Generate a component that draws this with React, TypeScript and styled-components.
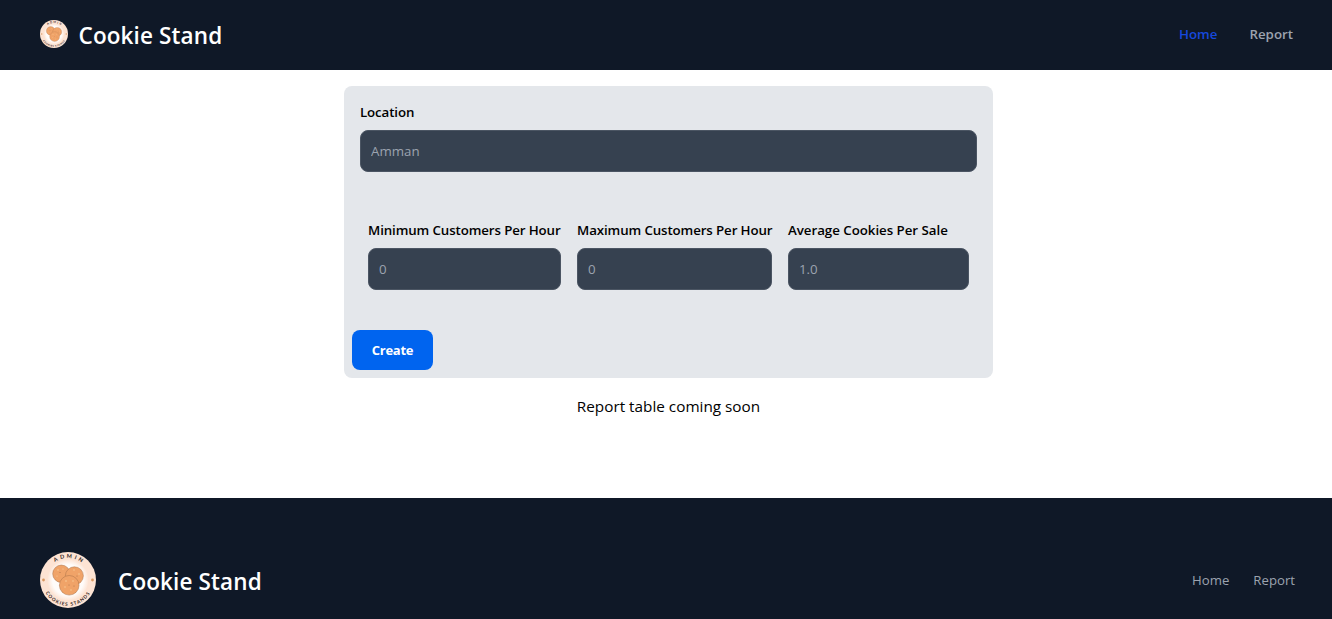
import React from "react";
import styled, { createGlobalStyle } from "styled-components";

const Global = createGlobalStyle`
  *, *::before, *::after { box-sizing: border-box; }
  html, body { margin: 0; height: 619px; overflow: hidden; }
  body {
    background: #fff;
    color: #000;
    font-family: "Open Sans", "Noto Sans", sans-serif;
    font-size: 15.3px;
    line-height: 24px;
  }
`;

const Header = styled.header`
  display: flex;
  align-items: center;
  justify-content: space-between;
  height: 70px;
  padding: 0 39px 2px 40px;
  background: #0f1827;
`;

const Brand = styled.a<{ $gap: number }>`
  display: flex;
  align-items: center;
  gap: ${(p) => p.$gap}px;
  color: #fff;
  text-decoration: none;
`;

const BrandName = styled.span`
  padding-top: 3px;
  font-size: 22.5px;
  font-weight: 600;
  line-height: 32px;
  letter-spacing: 0.12px;
  white-space: nowrap;
`;

const Nav = styled.nav<{ $gap: number }>`
  display: flex;
  gap: ${(p) => p.$gap}px;
`;

const NavLink = styled.a<{ $active?: boolean; $strong?: boolean }>`
  color: ${(p) => (p.$active ? "#1648dc" : "#9ca3af")};
  font-size: ${(p) => (p.$strong ? 13.3 : 13.2)}px;
  font-weight: ${(p) => (p.$strong ? 600 : 400)};
  line-height: 20px;
  text-decoration: none;
`;

const Main = styled.main`
  display: flex;
  flex-direction: column;
  align-items: center;
  height: 428px;
  padding: 16px 0 0 5px;
`;

const Form = styled.form`
  display: flex;
  flex-direction: column;
  align-items: flex-start;
  width: 649px;
  height: 292px;
  padding: 8px;
  background: #e4e7eb;
  border-radius: 8px;
`;

const FieldRow = styled.div`
  display: flex;
  gap: 16px;
  margin: 32px 0;
  padding: 16px 16px 8px;
`;

const Field = styled.div<{ $width: number }>`
  display: flex;
  flex-direction: column;
  gap: 8px;
  width: ${(p) => p.$width}px;
`;

const LocationField = styled(Field)`
  margin: 8px 8px 0;
`;

const Label = styled.label<{ $track?: number }>`
  font-size: 13.3px;
  font-weight: 600;
  line-height: 20px;
  letter-spacing: ${(p) => p.$track ?? -0.11}px;
  white-space: nowrap;
`;

const Input = styled.input`
  width: 100%;
  height: 42px;
  padding: 0 10px;
  border: 1px solid #4b5563;
  border-radius: 8px;
  background: #364150;
  color: #fff;
  font: 13.3px/20px "Open Sans", "Noto Sans", sans-serif;
  &::placeholder { color: #9ca3af; opacity: 1; }
`;

const Button = styled.button`
  flex: none;
  width: 81px;
  height: 40px;
  padding: 0;
  border: 0;
  border-radius: 8px;
  background: #0064ef;
  color: #fff;
  font: 700 13px/20px "Open Sans", "Noto Sans", sans-serif;
  letter-spacing: -0.25px;
`;

const Notice = styled.p`
  margin: 16px 0 0;
  white-space: nowrap;
`;

const Footer = styled.footer`
  display: flex;
  align-items: flex-start;
  justify-content: space-between;
  height: 121px;
  padding: 54px 37px 0 40px;
  background: #0f1827;
`;

const FooterNav = styled(Nav)`
  padding-top: 18px;
`;

function Logo({ size }: { size: number }) {
  return (
    <svg width={size} height={size} viewBox="0 0 56 56" aria-label="Cookie Stand logo">
      <defs>
        <path id={`top${size}`} d="M6 28a22 22 0 0 1 44 0" />
        <path id={`bottom${size}`} d="M2.2 28a25.8 25.8 0 0 0 51.6 0" />
        <radialGradient id={`glow${size}`}>
          <stop offset="0.75" stopColor="#fffcfa" />
          <stop offset="1" stopColor="#fde5d6" />
        </radialGradient>
      </defs>
      <circle cx="28" cy="28" r="28" fill="#fde3d3" />
      <circle cx="28" cy="28" r="20.5" fill={`url(#glow${size})`} />
      <g fill="#f0a368" stroke="#a87048" strokeWidth="0.5">
        <circle cx="21.4" cy="21.8" r="8.7" />
        <circle cx="34.4" cy="23.8" r="9" />
        <circle cx="29.2" cy="33.3" r="9.8" />
      </g>
      <g fill="#f8cf9c">
        <circle cx="18" cy="18" r="0.7" />
        <circle cx="23" cy="17" r="0.6" />
        <circle cx="17" cy="24" r="0.6" />
        <circle cx="34" cy="18" r="0.7" />
        <circle cx="39" cy="22" r="0.7" />
        <circle cx="26" cy="29" r="0.8" />
        <circle cx="33" cy="29" r="0.7" />
        <circle cx="25" cy="35" r="0.7" />
        <circle cx="31" cy="38" r="0.7" />
      </g>
      <g fill="#a66f48">
        <circle cx="20" cy="20.5" r="0.5" />
        <circle cx="37" cy="24" r="0.5" />
        <circle cx="29" cy="33" r="0.5" />
        <circle cx="34" cy="34" r="0.5" />
      </g>
      <circle cx="3.5" cy="28" r="1.4" fill="#d9985f" />
      <circle cx="52.5" cy="28" r="1.4" fill="#d9985f" />
      <g fill="#33231d" fontFamily="Lato, sans-serif" fontWeight="700" textAnchor="middle">
        <text fontSize="5.5" letterSpacing="2.3">
          <textPath href={`#top${size}`} startOffset="52%">ADMIN</textPath>
        </text>
        <text fontSize="4.7" letterSpacing="1">
          <textPath href={`#bottom${size}`} startOffset="50%">COOKIES STANDS</textPath>
        </text>
      </g>
    </svg>
  );
}

export default function App() {
  return (
    <>
      <Global />
      <Header>
        <Brand $gap={10.5}>
          <Logo size={28} />
          <BrandName>Cookie Stand</BrandName>
        </Brand>
        <Nav $gap={32}>
          <NavLink $active $strong>Home</NavLink>
          <NavLink $strong>Report</NavLink>
        </Nav>
      </Header>
      <Main>
        <Form>
          <LocationField $width={617}>
            <Label>Location</Label>
            <Input placeholder="Amman" />
          </LocationField>
          <FieldRow>
            <Field $width={193}>
              <Label>Minimum Customers Per Hour</Label>
              <Input placeholder="0" />
            </Field>
            <Field $width={195}>
              <Label>Maximum Customers Per Hour</Label>
              <Input placeholder="0" />
            </Field>
            <Field $width={181}>
              <Label $track={-0.03}>Average Cookies Per Sale</Label>
              <Input placeholder="1.0" />
            </Field>
          </FieldRow>
          <Button type="button">Create</Button>
        </Form>
        <Notice>Report table coming soon</Notice>
      </Main>
      <Footer>
        <Brand $gap={22}>
          <Logo size={56} />
          <BrandName>Cookie Stand</BrandName>
        </Brand>
        <FooterNav $gap={24}>
          <NavLink>Home</NavLink>
          <NavLink>Report</NavLink>
        </FooterNav>
      </Footer>
    </>
  );
}
